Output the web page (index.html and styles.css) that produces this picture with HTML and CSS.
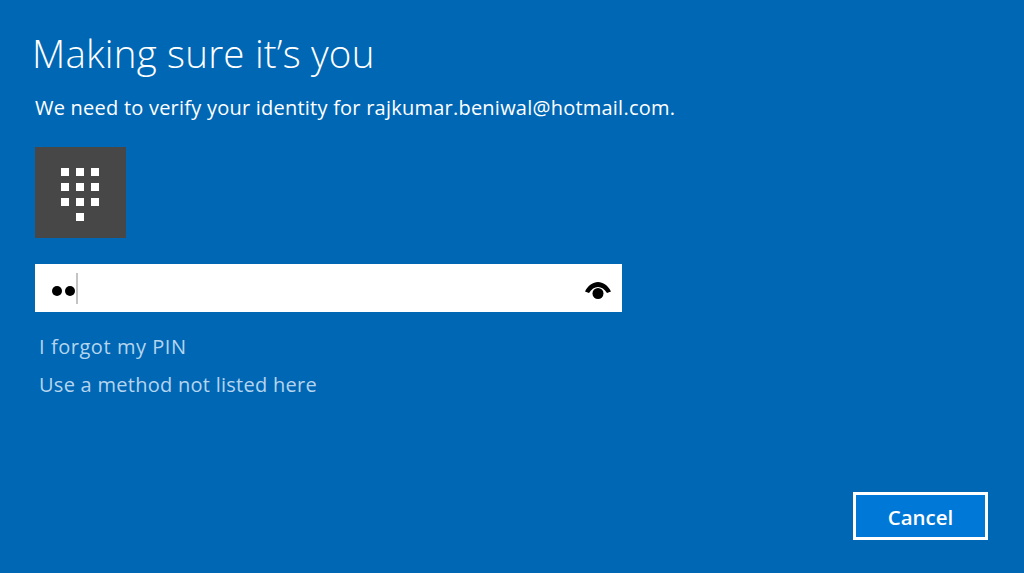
FILE: index.html
```html
<!DOCTYPE html>
<html lang="en">
<head>
<meta charset="utf-8">
<title>Making sure it's you</title>
<link rel="stylesheet" href="styles.css">
</head>
<body>
<main class="page">
  <h1 class="title">Making sure it’s you</h1>
  <p class="subtitle">We need to verify your identity for rajkumar.beniwal@hotmail.com.</p>
  <div class="tile">
    <svg class="keypad" width="40" height="54" viewBox="0 0 40 54" aria-hidden="true">
      <g fill="#fff">
        <rect x="1" y="0" width="8" height="8"/><rect x="16" y="0" width="8" height="8"/><rect x="31" y="0" width="8" height="8"/>
        <rect x="1" y="15" width="8" height="8"/><rect x="16" y="15" width="8" height="8"/><rect x="31" y="15" width="8" height="8"/>
        <rect x="1" y="30" width="8" height="8"/><rect x="16" y="30" width="8" height="8"/><rect x="31" y="30" width="8" height="8"/>
        <rect x="16" y="45" width="8" height="8"/>
      </g>
    </svg>
  </div>
  <div class="field">
    <span class="dots"><i class="dot"></i><i class="dot"></i></span>
    <span class="caret"></span>
    <svg class="eye" width="26" height="24" viewBox="0 0 26 24" aria-hidden="true">
      <path d="M0 15.500C3 9.500 8 6 13 6s10 3.500 13 9.500l-4 1.500C19.500 13 16.500 11 13 11S6.500 13 4 17z" fill="#000"/>
      <circle cx="13" cy="17.500" r="5.500" fill="#000"/>
    </svg>
  </div>
  <a class="link link-first" href="#">I forgot my PIN</a>
  <a class="link" href="#">Use a method not listed here</a>
  <div class="footer"><button class="cancel" type="button">Cancel</button></div>
</main>
</body>
</html>
```
FILE: styles.css
```css
* { box-sizing: border-box; }
html, body { margin: 0; height: 100%; overflow: hidden; }
body {
  background: #0067b5;
  color: #fff;
  font-family: "Open Sans", "Noto Sans", sans-serif;
}
.page {
  height: 573px;
  display: flex;
  flex-direction: column;
  align-items: flex-start;
  padding: 0 36px 33px 35px;
}
.title {
  margin: 27px 0 0 -3px;
  font-size: 38.5px;
  line-height: 52px;
  font-weight: 300;
  letter-spacing: 0.2px;
  white-space: nowrap;
}
.subtitle {
  margin: 15px 0 0;
  font-size: 20px;
  line-height: 28px;
  letter-spacing: 0.23px;
  white-space: nowrap;
}
.tile {
  margin-top: 25px;
  width: 91px;
  height: 91px;
  background: #474747;
  display: flex;
  align-items: flex-start;
  padding: 21px 0 0 25px;
}
.keypad { display: block; }
.field {
  margin-top: 26px;
  width: 587px;
  height: 48px;
  background: #fff;
  display: flex;
  align-items: center;
  padding: 0 11px 0 17px;
}
.dots { display: flex; gap: 3px; margin-top: 6px; }
.dot { width: 10px; height: 10px; border-radius: 50%; background: #000; display: block; }
.caret { width: 2px; height: 31px; background: #c4c4c4; margin: 1px 0 0 1px; }
.eye { margin-left: auto; }
.link {
  margin-left: 4px;
  color: #b5d5ee;
  font-size: 20px;
  line-height: 28px;
  letter-spacing: 0.27px;
  text-decoration: none;
  white-space: nowrap;
}
.link-first { margin-top: 21px; margin-bottom: 10px; letter-spacing: 0.55px; }
.footer { margin-top: auto; align-self: flex-end; }
.cancel {
  display: block;
  width: 135px;
  height: 48px;
  background: #0078d7;
  border: 3px solid #fff;
  color: #fff;
  font-family: inherit;
  font-size: 20.5px;
  font-weight: 600;
  padding: 0;
  line-height: 44px;
}
```
